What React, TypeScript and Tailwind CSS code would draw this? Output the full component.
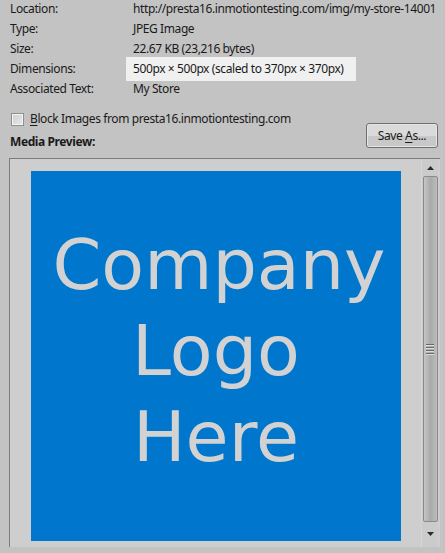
import React from "react";

const rows: [string, React.ReactNode][] = [
  ["Location:", "http://presta16.inmotiontesting.com/img/my-store-14001"],
  ["Type:", "JPEG Image"],
  ["Size:", "22.67 KB (23,216 bytes)"],
  [
    "Dimensions:",
    <span className="inline-block bg-[#f0f0f0] -ml-[7px] pl-[7px] pr-[12px] py-[2px] -my-[2px]">
      500px × 500px (scaled to 370px × 370px)
    </span>,
  ],
  ["Associated Text:", "My Store"],
];

export default function App() {
  return (
    <div
      className="w-[445px] h-[553px] overflow-hidden bg-[#c3c3c3] text-[12px] tracking-[-0.4px] text-[#1a1a1a]"
      style={{ fontFamily: '"Noto Sans", "Open Sans", sans-serif' }}
    >
      <div className="-mt-[1px] grid grid-cols-[123px_1fr] pl-[10px] whitespace-nowrap">
        {rows.map(([k, v], i) => (
          <React.Fragment key={i}>
            <div className="h-[20px] leading-[20px]">{k}</div>
            <div className="h-[20px] leading-[20px]">{v}</div>
          </React.Fragment>
        ))}
      </div>

      <div className="mt-[10px] flex items-end justify-between pr-[7px]">
        <div>
          <div className="flex h-[20px] items-center pl-[11px]">
            <div className="h-[13px] w-[13px] border border-[#8e8f8f] bg-gradient-to-br from-[#d0d0d0] to-[#e8e8e8] shadow-[inset_0_0_0_1px_#f4f4f4]" />
            <span className="ml-[6px] leading-[20px]">
              <span className="underline underline-offset-2">B</span>lock Images from presta16.inmotiontesting.com
            </span>
          </div>
          <div className="mt-[3px] h-[20px] pl-[10px] font-bold leading-[20px]">Media Preview:</div>
        </div>
        <button className="mb-[4px] h-[25px] w-[72px] rounded-[3px] border border-[#707070] bg-gradient-to-b from-[#dadada] from-50% to-[#c8c8c8] to-50% leading-[20px] text-[#1a1a1a] shadow-[inset_0_0_0_1px_#e4e4e4]">
          Save <span className="underline underline-offset-2">A</span>s...
        </button>
      </div>

      <div className="mt-[6px] ml-[9px] flex h-[389px] w-[431px] border-l border-t border-[#7c7c7c] bg-[#cecece]">
        <div className="pl-[21px] pt-[12px]">
          <div
            className="flex h-[370px] w-[370px] flex-col items-center bg-[#0077cc] pt-[51px] text-center text-[70px] leading-[86px] tracking-normal text-[#d2d2d2]"
            style={{ fontFamily: '"DejaVu Sans", sans-serif' }}
          >
            <div className="pl-[6px]">Company</div>
            <div>Logo</div>
            <div>Here</div>
          </div>
        </div>
        <div className="ml-auto mr-[2px] flex w-[17px] flex-col bg-[#cbcbcb] border-l border-[#d6d6d6]">
          <div className="flex h-[17px] items-center justify-center">
            <svg width="7" height="4" viewBox="0 0 7 4">
              <polygon points="3.5,0 7,4 0,4" fill="#2a2a2a" />
            </svg>
          </div>
          <div className="mx-auto flex h-[346px] w-[15px] items-center justify-center rounded-[2px] border border-[#8a8a8a] bg-gradient-to-r from-[#c6c6c6] via-[#aaaaaa] to-[#bdbdbd]">
            <div className="flex flex-col gap-[2px]">
              <div className="h-[1px] w-[8px] bg-[#6a6a6a] shadow-[0_1px_0_#dcdcdc]" />
              <div className="h-[1px] w-[8px] bg-[#6a6a6a] shadow-[0_1px_0_#dcdcdc]" />
              <div className="h-[1px] w-[8px] bg-[#6a6a6a] shadow-[0_1px_0_#dcdcdc]" />
              <div className="h-[1px] w-[8px] bg-[#6a6a6a] shadow-[0_1px_0_#dcdcdc]" />
            </div>
          </div>
          <div className="flex h-[24px] items-center justify-center">
            <svg width="7" height="4" viewBox="0 0 7 4">
              <polygon points="0,0 7,0 3.5,4" fill="#2a2a2a" />
            </svg>
          </div>
        </div>
      </div>
    </div>
  );
}
